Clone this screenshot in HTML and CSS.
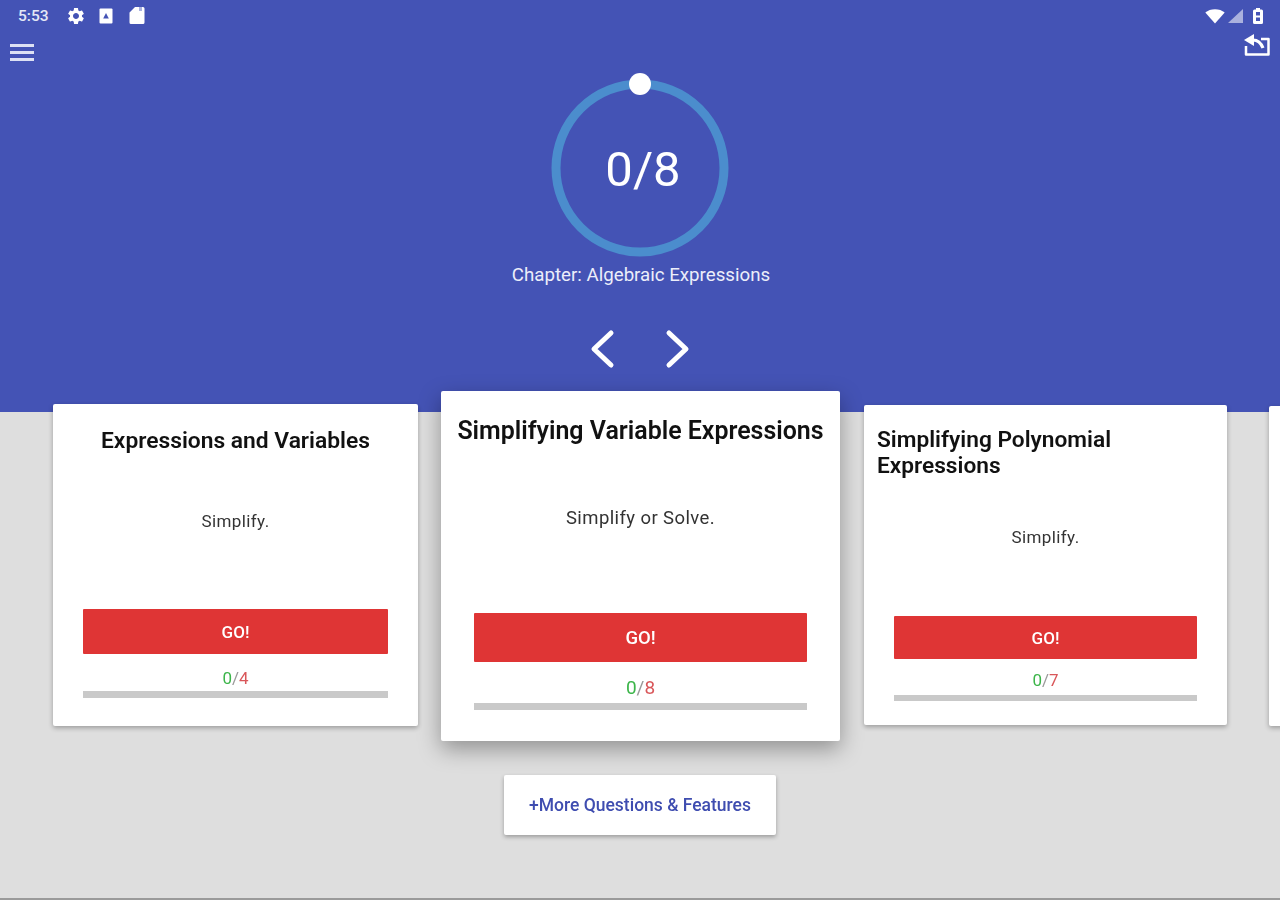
FILE: index.html
```html
<!DOCTYPE html>
<html lang="en">

<head>
    <meta charset="UTF-8">
    <title>Algebraic Expressions</title>
    <link rel="stylesheet" href="styles.css">
</head>

<body>
    <div class="page">
        <header class="top">
            <div class="status">
                <span class="time">5:53</span>
                <svg class="ic-gear" viewBox="0 0 24 24"><path fill="#fff" d="M19.14 12.94c.04-.3.06-.61.06-.94 0-.32-.02-.64-.07-.94l2.03-1.58c.18-.14.23-.41.12-.61l-1.92-3.32c-.12-.22-.37-.29-.59-.22l-2.39.96c-.5-.38-1.03-.7-1.62-.94l-.36-2.54c-.04-.24-.24-.41-.48-.41h-3.84c-.24 0-.43.17-.47.41l-.36 2.54c-.59.24-1.13.57-1.62.94l-2.39-.96c-.22-.08-.47 0-.59.22L2.74 8.87c-.12.21-.08.47.12.61l2.03 1.58c-.05.3-.09.63-.09.94s.02.64.07.94l-2.03 1.58c-.18.14-.23.41-.12.61l1.92 3.32c.12.22.37.29.59.22l2.39-.96c.5.38 1.03.7 1.62.94l.36 2.54c.05.24.24.41.48.41h3.84c.24 0 .44-.17.47-.41l.36-2.54c.59-.24 1.13-.56 1.62-.94l2.39.96c.22.08.47 0 .59-.22l1.92-3.32c.12-.22.07-.47-.12-.61l-2.01-1.58zM12 15.6c-1.98 0-3.6-1.62-3.6-3.6s1.62-3.6 3.6-3.6 3.6 1.62 3.6 3.6-1.62 3.6-3.6 3.6z"/></svg>
                <svg class="ic-doc" viewBox="0 0 14 16"><rect x="0.5" y="0.5" width="13" height="15" rx="1" fill="#fff"/><path fill="#4453b5" d="M7 5l2.800 5.500H4.200z"/></svg>
                <svg class="ic-sd" viewBox="0 0 16 18"><path fill="#fff" d="M6 1h8a1.500 1.500 0 0 1 1.500 1.500v14A1.500 1.500 0 0 1 14 18H2a1.500 1.500 0 0 1-1.500-1.500V6.500z"/><path fill="#aab2e0" d="M10 1h3v4h-3z"/></svg>
                <span class="grow"></span>
                <svg class="ic-wifi" viewBox="0 0 20 15"><path fill="#fff" d="M10 14.500L.3 3.600C2.800 1.500 6.200.3 10 .3s7.200 1.200 9.700 3.300z"/></svg>
                <svg class="ic-signal" viewBox="0 0 15 14"><path fill="#fff" fill-opacity=".55" d="M15 0v14H0z"/></svg>
                <svg class="ic-batt" viewBox="0 0 10 16"><path fill="#fff" d="M3 0h4v1.500h1.500A1.500 1.500 0 0 1 10 3v11.500A1.500 1.500 0 0 1 8.500 16h-7A1.500 1.500 0 0 1 0 14.500V3a1.500 1.500 0 0 1 1.500-1.500H3z"/><path fill="#4453b5" d="M3 4h4v3.500H3zM3 9.500h4V13H3z"/></svg>
            </div>
            <div class="toolbar">
                <div class="burger"><i></i><i></i><i></i></div>
                <svg class="ic-back" viewBox="0 0 26 22" fill="none" stroke="#fff">
                    <path stroke-width="2.500" stroke-linejoin="round" d="M17 5h7.500v15.500H2V12"/>
                    <path stroke-width="3.200" d="M19 14C17 9 14 6 9 6"/>
                    <path fill="#fff" stroke="none" d="M10 0v12L0 6z"/>
                </svg>
            </div>
            <div class="ring">
                <svg class="ring-svg" viewBox="0 0 190 190">
                    <circle cx="95" cy="95" r="84" fill="none" stroke="#4b8dcd" stroke-width="9"/>
                    <circle cx="95" cy="11" r="11" fill="#fff"/>
                </svg>
                <span class="ring-num">0/8</span>
            </div>
            <div class="chapter">Chapter: Algebraic Expressions</div>
            <div class="arrows">
                <svg viewBox="0 0 30 40"><path d="M23 4L6 20l17 16" fill="none" stroke="#fff" stroke-width="5" stroke-linecap="round" stroke-linejoin="round"/></svg>
                <svg viewBox="0 0 30 40"><path d="M6 4l17 16L6 36" fill="none" stroke="#fff" stroke-width="5" stroke-linecap="round" stroke-linejoin="round"/></svg>
            </div>
        </header>

        <div class="cards">
            <section class="card card-a">
                <h2>Expressions and Variables</h2>
                <p class="desc">Simplify.</p>
                <button class="go">GO!</button>
                <div class="count"><b>0</b><i>/</i><em>4</em></div>
                <div class="bar"></div>
            </section>
            <section class="card card-b">
                <h2>Simplifying Variable Expressions</h2>
                <p class="desc">Simplify or Solve.</p>
                <button class="go">GO!</button>
                <div class="count"><b>0</b><i>/</i><em>8</em></div>
                <div class="bar"></div>
            </section>
            <section class="card card-c">
                <h2>Simplifying Polynomial Expressions</h2>
                <p class="desc">Simplify.</p>
                <button class="go">GO!</button>
                <div class="count"><b>0</b><i>/</i><em>7</em></div>
                <div class="bar"></div>
            </section>
            <section class="card card-d"></section>
        </div>

        <button class="more">+More Questions &amp; Features</button>
    </div>
</body>

</html>
```

FILE: styles.css
```css
html,
body {
    margin: 0;
    height: 100%;
}

body {
    font-family: Roboto, "Liberation Sans", sans-serif;
    background-color: #dedede;
}

/* the reference is a soft upscaled capture */
.page {
    width: 1280px;
    height: 900px;
    box-sizing: border-box;
    border-bottom: 2px solid #9a9a9a;
    overflow: hidden;
    display: flex;
    flex-flow: column;
    filter: blur(0.4px);
}

.top {
    height: 412px;
    flex-shrink: 0;
    background-color: #4453b5;
    color: #fff;
    display: flex;
    flex-flow: column;
    align-items: center;
}

.status {
    width: 100%;
    height: 32px;
    box-sizing: border-box;
    padding: 0 17px 0 18px;
    display: flex;
    align-items: center;
}

.time {
    font-size: 15.500px;
    font-weight: 500;
    width: 34px;
    color: #e4e7f6;
}

.grow {
    flex: 1;
}

.ic-gear {
    width: 20px;
    height: 20px;
    margin-left: 14px;
}

.ic-doc {
    width: 14px;
    height: 16px;
    margin-left: 13px;
}

.ic-sd {
    width: 16px;
    height: 18px;
    margin-left: 16px;
    margin-bottom: 2px;
}

.ic-wifi {
    width: 20px;
    height: 15px;
}

.ic-signal {
    width: 15px;
    height: 14px;
    margin-left: 3px;
}

.ic-batt {
    width: 10px;
    height: 16px;
    margin-left: 10px;
}

.toolbar {
    width: 100%;
    height: 40px;
    box-sizing: border-box;
    padding: 0 10px 0 10px;
    display: flex;
    justify-content: space-between;
    align-items: center;
}

.burger {
    width: 24px;
    display: flex;
    flex-flow: column;
    gap: 4px;
}

.burger i {
    height: 3px;
    background-color: #dde1f4;
}

.ic-back {
    width: 26px;
    height: 22px;
    margin-top: -14px;
}

.ring {
    width: 190px;
    height: 190px;
    margin-top: 1px;
    display: grid;
    place-items: center;
}

.ring-svg,
.ring-num {
    grid-area: 1 / 1;
}

.ring-svg {
    width: 190px;
    height: 190px;
}

.ring-num {
    font-size: 49px;
    padding: 3px 0 0 6px;
}

.chapter {
    font-size: 18.700px;
    line-height: 24px;
    color: #eceefa;
    padding-left: 2px;
}

.arrows {
    margin-top: 42px;
    display: flex;
    gap: 45px;
}

.arrows svg {
    width: 30px;
    height: 40px;
}

.cards {
    margin-top: -21px;
    padding-left: 53px;
    display: flex;
    align-items: center;
    gap: 23px;
}

.card {
    flex-shrink: 0;
    box-sizing: border-box;
    background-color: #fff;
    border-radius: 2px;
    display: flex;
    flex-flow: column;
    box-shadow: 0 2px 5px rgba(0, 0, 0, 0.3);
}

.card h2 {
    margin: 0;
    font-weight: 600;
    color: #111;
}

.desc {
    margin: 0;
    text-align: center;
    color: #333;
    letter-spacing: 0.4px;
}

.go {
    margin-top: auto;
    border: none;
    border-radius: 1px;
    background-color: #df3535;
    color: #fff;
    font-family: inherit;
    font-weight: 500;
    padding: 0;
}

.count {
    text-align: center;
}

.count b {
    font-weight: 400;
    color: #3cb54a;
}

.count i {
    font-style: normal;
    color: #999;
}

.count em {
    font-style: normal;
    color: #d9575a;
}

.bar {
    background-color: #c9c9c9;
}

.card-a {
    width: 365px;
    height: 322px;
    margin-bottom: 2px;
    padding: 24px 30px 28px;
}

.card-a h2 {
    font-size: 22.800px;
    line-height: 26px;
    text-align: center;
    margin: 0 -20px;
}

.card-a .desc {
    font-size: 17px;
    margin-top: 57px;
}

.card-a .go {
    height: 45px;
    font-size: 17px;
}

.card-a .count {
    font-size: 17px;
    line-height: 20px;
    margin-top: 14px;
}

.card-a .bar {
    height: 7px;
    margin-top: 3px;
}

.card-b {
    width: 399px;
    height: 350px;
    padding: 26px 33px 31px;
    box-shadow: 0 8px 22px rgba(0, 0, 0, 0.35);
}

.card-b h2 {
    font-size: 24.950px;
    line-height: 28px;
    text-align: center;
    white-space: nowrap;
    margin: 0 -20px;
}

.card-b .desc {
    font-size: 18.500px;
    margin-top: 62px;
}

.card-b .go {
    height: 49px;
    font-size: 18.500px;
}

.card-b .count {
    font-size: 19px;
    line-height: 22px;
    margin-top: 15px;
}

.card-b .bar {
    height: 7px;
    margin-top: 4px;
}

.card-c {
    width: 363px;
    height: 320px;
    margin: 0 0 2px 1px;
    padding: 22px 30px 24px;
}

.card-c h2 {
    font-size: 22.700px;
    line-height: 26px;
    margin: 0 0 0 -17px;
}

.card-c .desc {
    font-size: 17px;
    margin-top: 48px;
}

.card-c .go {
    height: 43px;
    font-size: 17px;
}

.card-c .count {
    font-size: 17px;
    line-height: 20px;
    margin-top: 11px;
}

.card-c .bar {
    height: 6px;
    margin-top: 5px;
}

.card-d {
    width: 360px;
    height: 320px;
    margin-left: 19px;
}

.more {
    align-self: center;
    width: 272px;
    height: 60px;
    margin-top: 34px;
    border: none;
    border-radius: 2px;
    background-color: #fff;
    color: #3f4db0;
    font-family: inherit;
    font-size: 17.500px;
    font-weight: 500;
    box-shadow: 0 2px 4px rgba(0, 0, 0, 0.3);
}
```
